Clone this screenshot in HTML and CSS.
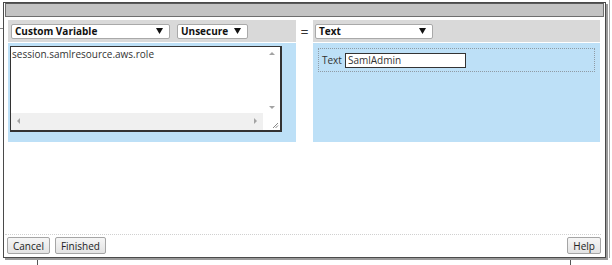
FILE: index.html
```html
<!DOCTYPE html>
<html>
<head>
<meta charset="utf-8">
<link rel="stylesheet" href="styles.css">
</head>
<body>
<div class="bg-line bg-left"></div>
<div class="bg-line bg-bottom1"></div>
<div class="bg-line bg-bottom2"></div>
<div class="bg-line bg-right"></div>
<div class="window">
  <div class="titlebar"></div>
  <div class="editor">
    <div class="column">
      <div class="strip">
        <div class="select select-var"><span class="sel-text">Custom Variable</span><svg class="arrow" width="7" height="6" viewBox="0 0 7 6"><path d="M0 0 H7 L3.5 6 Z" fill="#111"/></svg></div>
        <div class="select select-sec"><span class="sel-text">Unsecure</span><svg class="arrow" width="7" height="6" viewBox="0 0 7 6"><path d="M0 0 H7 L3.5 6 Z" fill="#111"/></svg></div>
      </div>
      <div class="panel panel-left">
        <div class="textarea">
          <div class="ta-main">
            <div class="ta-text">session.samlresource.aws.role</div>
            <div class="vscroll">
              <span class="sarrow up"></span>
              <span class="sarrow down"></span>
            </div>
          </div>
          <div class="ta-bottom">
            <div class="hscroll">
              <span class="sarrow left"></span>
              <span class="sarrow right"></span>
            </div>
            <div class="grip">
              <svg width="17" height="17" viewBox="0 0 17 17"><path d="M15 10 L10 15 M15 12.5 L12.5 15" stroke="#888" stroke-width="1" fill="none"/></svg>
            </div>
          </div>
        </div>
      </div>
    </div>
    <div class="equals">=</div>
    <div class="column">
      <div class="strip">
        <div class="select select-type"><span class="sel-text">Text</span><svg class="arrow" width="7" height="6" viewBox="0 0 7 6"><path d="M0 0 H7 L3.5 6 Z" fill="#111"/></svg></div>
      </div>
      <div class="panel panel-right">
        <div class="fieldset">
          <span class="label">Text</span>
          <div class="input">SamlAdmin</div>
        </div>
      </div>
    </div>
  </div>
  <div class="footer">
    <div class="btn-group">
      <button class="btn">Cancel</button>
      <button class="btn">Finished</button>
    </div>
    <button class="btn">Help</button>
  </div>
</div>
</body>
</html>
```

FILE: styles.css
```css
* { box-sizing: border-box; }
html, body { margin: 0; padding: 0; background: #fff; }
body {
  width: 612px;
  height: 265px;
  position: relative;
  overflow: hidden;
  font-family: "Open Sans", "Noto Sans", sans-serif;
  font-size: 10px;
  color: #222;
}
.bg-line { position: absolute; background: #8a8a8a; }
.bg-left { left: 0; top: 28px; width: 3px; height: 1px; }
.bg-bottom1 { left: 37px; top: 259px; width: 1px; height: 6px; background: #555; }
.bg-bottom2 { left: 570px; top: 259px; width: 1px; height: 6px; background: #555; }
.bg-right { left: 609px; top: 0; width: 1px; height: 258px; background: #aaa; }

.window {
  position: absolute;
  left: 3px;
  top: 2px;
  width: 603px;
  height: 256px;
  border: 1px solid #4a4a4a;
  background: #fff;
  box-shadow: 2px 2px 0 #9a9a9a;
  display: flex;
  flex-direction: column;
}
.titlebar {
  margin: 0 1px;
  height: 14px;
  background: #c3c3c3;
  border: 1px solid #6e6e6e;
  border-top-color: #5a5a5a;
}
.editor {
  display: flex;
  padding: 3px 4px 0 4px;
}
.column { width: 288px; display: flex; flex-direction: column; }
.column + .equals + .column { width: 287px; }
.equals {
  width: 17px;
  text-align: center;
  font-size: 14px;
  line-height: 14px;
  padding-top: 5px;
  color: #333;
}
.strip {
  height: 22px;
  background: #d9d9d9;
  display: flex;
  align-items: center;
  padding-left: 3px;
  gap: 7px;
}
.select {
  height: 15px;
  background: #fff;
  border: 1px solid #a9a9a9;
  border-radius: 2px;
  display: flex;
  align-items: center;
  justify-content: space-between;
  padding: 0 6px 0 3px;
  font-weight: bold;
  color: #111;
  font-size: 10px;
  line-height: 13px;
}
.select-var { width: 159px; }
.select-sec { width: 71px; }
.select-type { width: 118px; margin-left: -1px; }
.arrow { display: block; }

.panel {
  margin-top: 1px;
  height: 99px;
  background: #bde0f7;
}
.panel-left { padding: 3px 0 0 2px; }
.panel-right { padding: 5px 5px 0 5px; }

.textarea {
  width: 272px;
  height: 86px;
  border: 1px solid #333;
  border-right-width: 2px;
  border-bottom-width: 2px;
  background: #fff;
  display: flex;
  flex-direction: column;
}
.ta-main { flex: 1; display: flex; }
.ta-text {
  flex: 1;
  padding: 1px 1px;
  color: #333;
  line-height: 13px;
}
.vscroll {
  width: 17px;
  background: #fff;
  position: relative;
}
.ta-bottom { height: 17px; display: flex; }
.hscroll {
  flex: 1;
  background: #f0f0f0;
  position: relative;
}
.grip { width: 17px; background: #fff; }
.grip svg { display: block; }
.sarrow { position: absolute; width: 0; height: 0; border: 3px solid transparent; }
.sarrow.up { left: 6px; top: 5px; border-bottom: 3px solid #a3a3a3; border-top: 0; }
.sarrow.down { left: 6px; bottom: 4px; border-top: 3px solid #a3a3a3; border-bottom: 0; }
.sarrow.left { left: 6px; top: 5px; border-right: 3px solid #a3a3a3; border-left: 0; }
.sarrow.right { right: 6px; top: 5px; border-left: 3px solid #a3a3a3; border-right: 0; }

.fieldset {
  height: 24px;
  border: 1px dotted #8f9ba5;
  display: flex;
  align-items: center;
  padding-left: 3px;
  gap: 3px;
}
.label { color: #333; }
.input {
  width: 121px;
  height: 15px;
  border: 1px solid #333;
  background: #fff;
  padding: 0 2px;
  line-height: 12px;
  color: #333;
}

.footer {
  margin-top: auto;
  border-top: 1px dotted #d0d0d0;
  margin-left: 1px;
  margin-right: 4px;
  padding: 2px 0 3px 2px;
  display: flex;
  justify-content: space-between;
  align-items: center;
}
.btn-group { display: flex; gap: 5px; }
.btn {
  font-family: "Open Sans", "Noto Sans", sans-serif;
  font-size: 10px;
  color: #222;
  height: 17px;
  padding: 0 5px;
  border: 1px solid #a5a5a5;
  border-radius: 2px;
  background: linear-gradient(#f6f6f6, #e3e3e3);
  line-height: 14px;
}
```
